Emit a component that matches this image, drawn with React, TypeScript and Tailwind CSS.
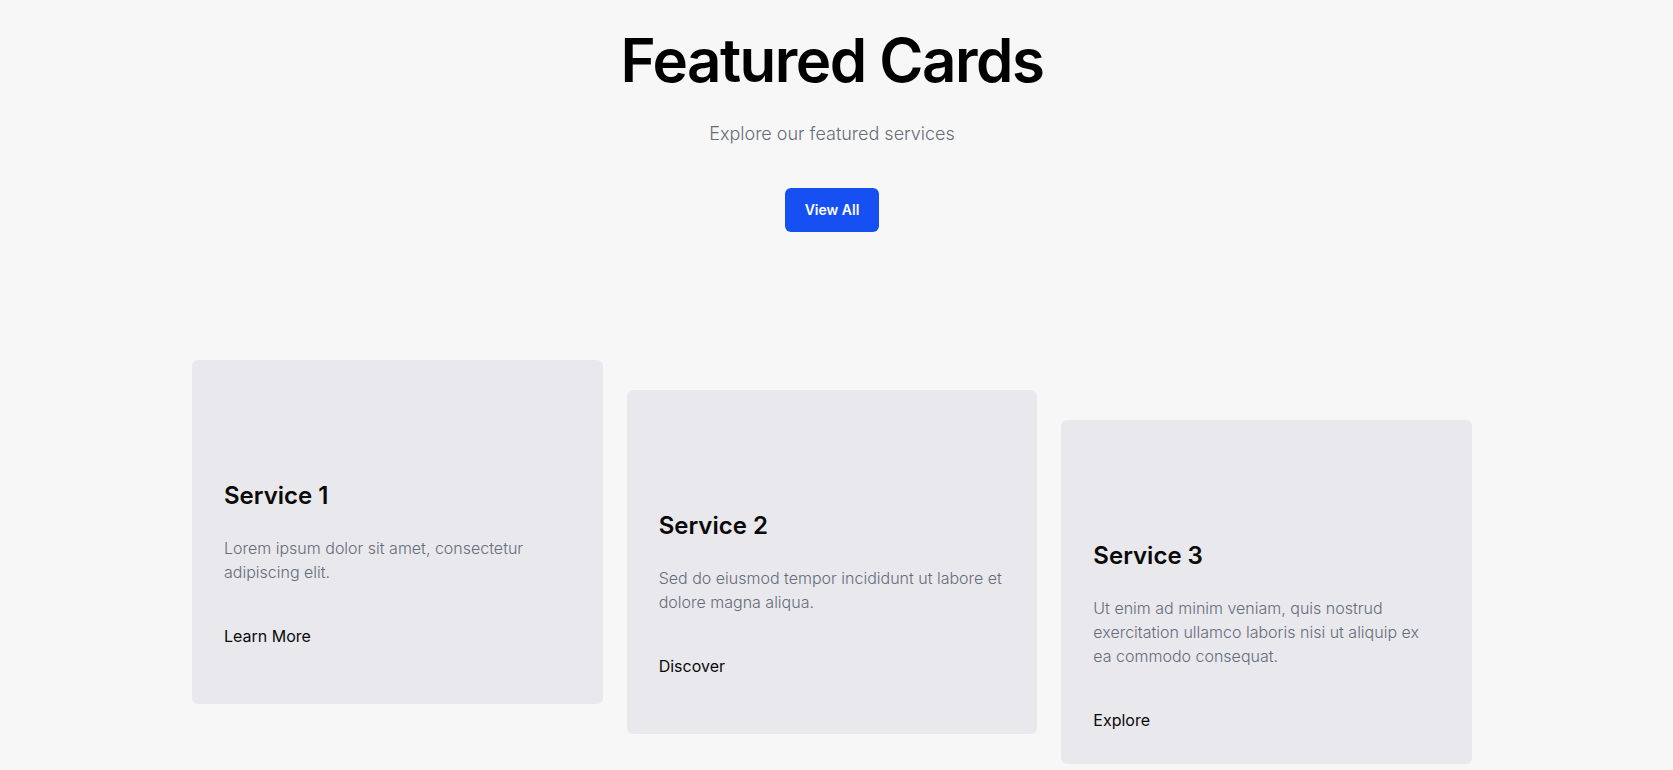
import React from "react";

const cards = [
  {
    title: "Service 1",
    desc: "Lorem ipsum dolor sit amet, consectetur adipiscing elit.",
    link: "Learn More",
    shift: "",
  },
  {
    title: "Service 2",
    desc: "Sed do eiusmod tempor incididunt ut labore et dolore magna aliqua.",
    link: "Discover",
    shift: "translate-y-[30px]",
  },
  {
    title: "Service 3",
    desc: "Ut enim ad minim veniam, quis nostrud exercitation ullamco laboris nisi ut aliquip ex ea commodo consequat.",
    link: "Explore",
    shift: "translate-y-[60px]",
  },
];

export default function App() {
  return (
    <div
      className="min-h-screen bg-[#f7f7f7] pr-[9px] text-[#0a0a0a]"
      style={{ fontFamily: "Inter, 'Noto Sans', sans-serif" }}
    >
      <div className="flex flex-col items-center pt-[30px]">
        <h1 className="text-[60px] leading-[60px] font-semibold tracking-tight text-black">
          Featured Cards
        </h1>
        <p className="mt-[30px] text-lg leading-7 font-light text-[#666d7a]">
          Explore our featured services
        </p>
        <button className="mt-10 rounded-md bg-[#1650f2] px-5 py-3 text-sm leading-5 font-semibold text-white">
          View All
        </button>
      </div>
      <div className="mx-auto mt-32 grid max-w-[1280px] grid-cols-3 gap-6">
        {cards.map((c) => (
          <div
            key={c.title}
            className={`flex flex-col rounded-md bg-[#e9e8ed] p-8 ${c.shift}`}
          >
            <div className="h-[88px]" />
            <h3 className="text-2xl leading-8 font-semibold text-[#0a0a0a]">
              {c.title}
            </h3>
            <p className="mt-6 text-base leading-6 font-light text-[#666d7a]">
              {c.desc}
            </p>
            <a className="mt-10 text-base leading-6 text-[#0a0a0a]">{c.link}</a>
          </div>
        ))}
      </div>
    </div>
  );
}
